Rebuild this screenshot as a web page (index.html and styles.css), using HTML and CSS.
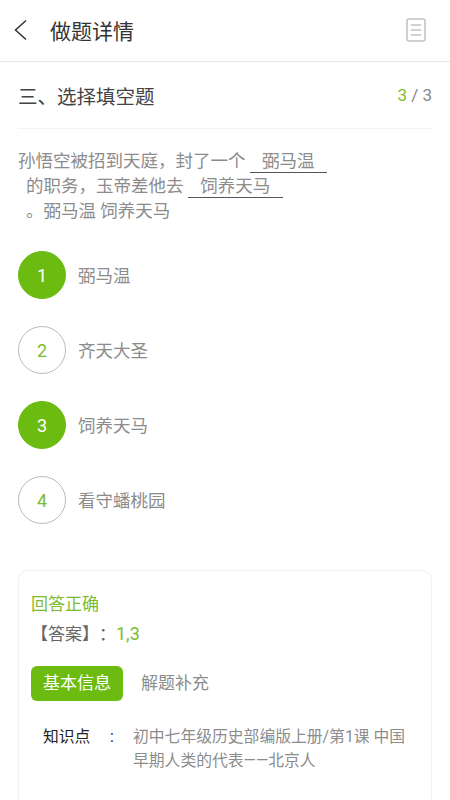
FILE: index.html
```html
<!DOCTYPE html>
<html lang="zh">
<head>
    <meta charset="UTF-8">
    <meta name="viewport" content="width=device-width, initial-scale=1.0">
    <title>做题详情</title>
    <link rel="stylesheet" href="styles.css">
</head>
<body>
    <div class="top-bar">
        <svg class="back-icon" width="14" height="22" viewBox="0 0 14 22">
            <path d="M13 1.5 L2.5 11 L13 20.5" fill="none" stroke="#333" stroke-width="1.5"/>
        </svg>
        <div class="top-title">做题详情</div>
        <svg class="list-icon" width="20" height="24" viewBox="0 0 20 24">
            <rect x="1" y="1" width="18" height="22" rx="2" fill="none" stroke="#c4c4c4" stroke-width="1.6"/>
            <path d="M5 7 H15 M5 12 H15 M5 17 H15" stroke="#c4c4c4" stroke-width="1.4"/>
        </svg>
    </div>

    <div class="content">
        <div class="section-head">
            <div class="section-title">三、选择填空题</div>
            <div class="counter"><span class="soft-green">3</span> / 3</div>
        </div>

        <div class="question">
            <div>孙悟空被招到天庭，封了一个 <span class="blank blank-one">弼马温</span></div>
            <div class="indent">的职务，玉帝差他去 <span class="blank blank-two">饲养天马</span></div>
            <div class="indent">。弼马温 饲养天马</div>
        </div>

        <div class="options">
            <div class="option">
                <div class="circle active">1</div>
                <div class="option-text">弼马温</div>
            </div>
            <div class="option">
                <div class="circle">2</div>
                <div class="option-text">齐天大圣</div>
            </div>
            <div class="option">
                <div class="circle active">3</div>
                <div class="option-text">饲养天马</div>
            </div>
            <div class="option">
                <div class="circle">4</div>
                <div class="option-text">看守蟠桃园</div>
            </div>
        </div>

        <div class="card">
            <div class="result">回答正确</div>
            <div class="answer">【答案】<span class="answer-colon">：</span><span class="answer-value">1,3</span></div>
            <div class="tabs">
                <div class="tab tab-on">基本信息</div>
                <div class="tab">解题补充</div>
            </div>
            <div class="info-row">
                <div class="info-label">知识点</div>
                <div class="info-colon">:</div>
                <div class="info-value">初中七年级历史部编版上册/第1课 中国早期人类的代表——北京人</div>
            </div>
        </div>
    </div>
</body>
</html>
```

FILE: styles.css
```css
html, body {
    height: 800px;
    overflow: hidden;
}
body {
    margin: 0;
    background-color: #fff;
    color: #8c8c8c;
    font-family: Roboto, "Noto Sans CJK SC", sans-serif;
    text-spacing-trim: space-all;
}
.soft-green {
    color: #7dbb2e;
}
.top-bar {
    display: flex;
    align-items: center;
    box-sizing: border-box;
    height: 62px;
    padding: 0 24px 2px 13px;
    border-bottom: 1px solid #e8e8e8;
}
.back-icon {
    margin-right: 23px;
}
.top-title {
    flex: 1;
    font-size: 21px;
    color: #333;
}
.content {
    padding: 0 18px;
}
.section-head {
    display: flex;
    justify-content: space-between;
    align-items: center;
    height: 66px;
    border-bottom: 1px solid #f3f3f3;
}
.section-title {
    font-size: 19.5px;
    color: #444;
}
.counter {
    font-size: 17px;
    color: #888;
}
.question {
    margin-top: 20px;
    font-size: 17.5px;
    line-height: 25px;
}
.indent {
    padding-left: 8px;
}
.blank {
    display: inline-block;
    box-sizing: border-box;
    height: 24px;
    line-height: 24px;
    text-align: center;
    border-bottom: 1px solid #555;
}
.blank-one {
    width: 77px;
}
.blank-two {
    width: 95px;
}
.options {
    display: flex;
    flex-direction: column;
    gap: 27px;
    margin-top: 27px;
}
.option {
    display: flex;
    align-items: center;
    gap: 12px;
}
.circle {
    box-sizing: border-box;
    width: 48px;
    height: 48px;
    border: 1px solid #bbb;
    border-radius: 50%;
    color: #7dbb2e;
    font-size: 18px;
    line-height: 48px;
    text-align: center;
}
.circle.active {
    border-color: #6cbb10;
    background-color: #6cbb10;
    color: #fff;
}
.option-text {
    padding-bottom: 2px;
    font-size: 17.5px;
}
.card {
    margin-top: 46px;
    height: 260px;
    box-sizing: border-box;
    padding: 21px 12px;
    border: 1px solid #f0f0f0;
    border-radius: 10px;
}
.result {
    font-size: 17px;
    line-height: 24px;
    color: #7dbb2e;
}
.answer {
    margin-top: 5px;
    font-size: 17px;
    line-height: 24px;
    color: #666;
}
.answer-colon {
    font-family: "Noto Sans CJK JP", sans-serif;
}
.answer-value {
    font-size: 18px;
    color: #7dbb2e;
}
.tabs {
    display: flex;
    gap: 6px;
    margin-top: 20px;
}
.tab {
    padding: 0 12px;
    height: 35px;
    line-height: 35px;
    border-radius: 6px;
    font-size: 17px;
}
.tab-on {
    background-color: #6cbb10;
    color: #fff;
}
.info-row {
    display: flex;
    margin-top: 24px;
    padding-left: 12px;
    font-size: 15.8px;
    line-height: 24px;
}
.info-label {
    width: 48px;
    color: #222;
}
.info-colon {
    width: 42px;
    text-align: center;
    color: #222;
}
.info-value {
    width: 280px;
}
```
